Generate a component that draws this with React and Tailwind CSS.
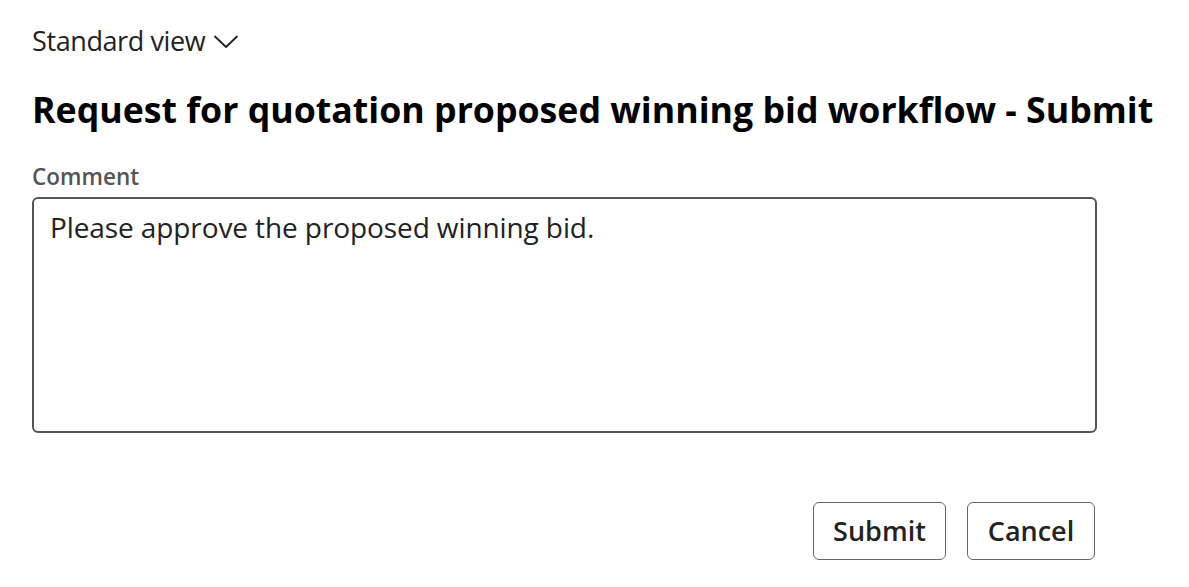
const App = () => {
  return (
    <main
      className="min-h-screen w-full bg-white text-[#111] pl-[32px] pt-[24px]"
      style={{ fontFamily: '"Open Sans", "Noto Sans", sans-serif' }}
    >
      {/* view switcher */}
      <button className="flex items-center gap-[9px] text-[27px] leading-[34px] text-[#222]">
        <span className="tracking-[-0.4px]">Standard view</span>
        <svg width="24" height="14" viewBox="0 0 24 14" fill="none" className="mt-[2px]">
          <polyline points="1,1.5 12,12 23,1.5" stroke="#222" strokeWidth="1.8" strokeLinecap="round" strokeLinejoin="round" />
        </svg>
      </button>

      {/* title */}
      <h1 className="mt-[29px] text-[35.7px] leading-[44px] font-bold text-black whitespace-nowrap">
        Request for quotation proposed winning bid workflow - Submit
      </h1>

      {/* comment field */}
      <div className="w-[1065px] mt-[32px]">
        <label className="block text-[22.5px] leading-[28px] font-semibold text-[#555]">
          Comment
        </label>
        <textarea
          defaultValue="Please approve the proposed winning bid."
          className="mt-[6px] block w-full h-[236px] resize-none rounded-[6px] border-2 border-[#555] px-[16px] py-[10px] text-[28px] leading-[36px] text-[#222] tracking-[-0.1px] outline-none"
        />

        {/* actions */}
        <div className="flex justify-end gap-[21px] mt-[69px] pr-[2px]">
          <button className="w-[133px] h-[58px] rounded-[6px] border-[1.5px] border-[#666] text-[27px] font-semibold text-[#222]">
            Submit
          </button>
          <button className="w-[128px] h-[58px] rounded-[6px] border-[1.5px] border-[#666] text-[27px] font-semibold text-[#222]">
            Cancel
          </button>
        </div>
      </div>
    </main>
  );
};

export default App;
